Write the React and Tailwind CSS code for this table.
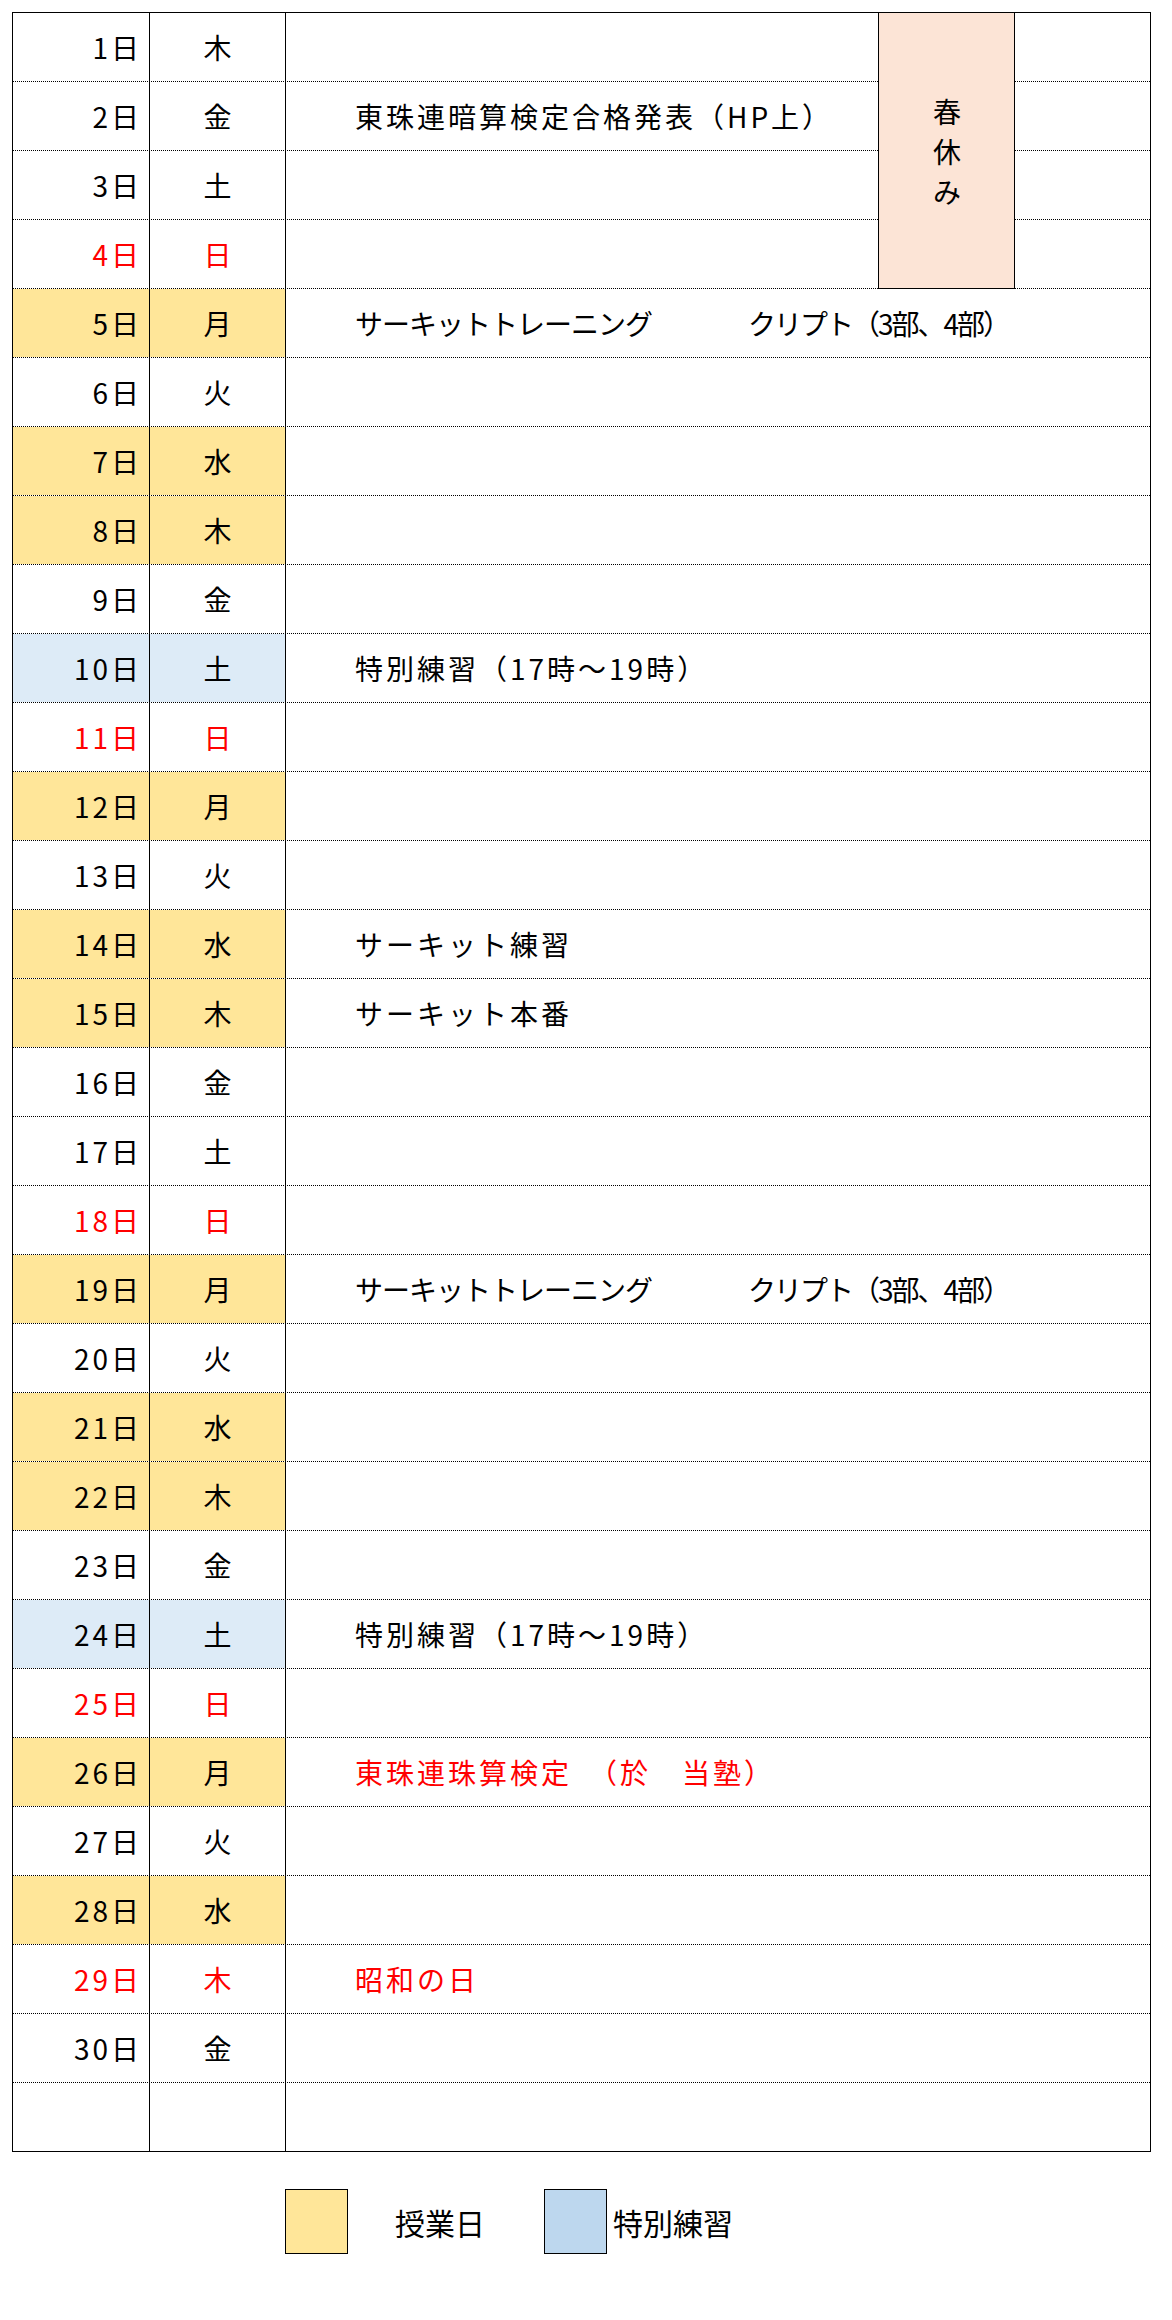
const WEEK = ['木', '金', '土', '日', '月', '火', '水'];

const CLASS_DAYS = [5, 7, 8, 12, 14, 15, 19, 21, 22, 26, 28];
const SPECIAL_DAYS = [10, 24];
const HOLIDAYS = [29];

const EVENTS = {
  2: { text: '東珠連暗算検定合格発表（HP上）' },
  5: { text: 'サーキットトレーニング', extra: 'クリプト（3部、4部）' },
  10: { text: '特別練習（17時～19時）' },
  14: { text: 'サーキット練習' },
  15: { text: 'サーキット本番' },
  19: { text: 'サーキットトレーニング', extra: 'クリプト（3部、4部）' },
  24: { text: '特別練習（17時～19時）' },
  26: { text: '東珠連珠算検定　（於　当塾）', red: true },
  29: { text: '昭和の日', red: true },
};

const days = Array.from({ length: 30 }, (_, i) => {
  const day = i + 1;
  const weekday = WEEK[i % 7];
  return {
    day,
    weekday,
    red: weekday === '日' || HOLIDAYS.includes(day),
    fill: CLASS_DAYS.includes(day) ? 'bg-[#ffe699]' : SPECIAL_DAYS.includes(day) ? 'bg-[#ddebf7]' : 'bg-white',
    event: EVENTS[day],
  };
});

const Row = ({ item }) => {
  const color = item.red ? 'text-[#ff0000]' : 'text-black';
  const ev = item.event;
  return (
    <div className="flex h-[69px] border-b border-dotted border-black">
      <div className={`w-[137px] shrink-0 border-r border-black flex items-center justify-end pr-[7px] ${item.fill} ${color}`}>
        {item.day}日
      </div>
      <div className={`w-[136px] shrink-0 border-r border-black flex items-center justify-center pl-[3px] ${item.fill} ${color}`}>
        {item.weekday}
      </div>
      <div className="flex-1 flex items-center pl-[69px]">
        {ev && !ev.extra && (
          <span className={ev.red ? 'text-[#ff0000]' : 'text-black'}>{ev.text}</span>
        )}
        {ev && ev.extra && (
          <>
            <span className="w-[393px] tracking-[-1px]">{ev.text}</span>
            <span className="tracking-[-2px]">{ev.extra}</span>
          </>
        )}
      </div>
    </div>
  );
};

export default function App() {
  return (
    <div className="w-[1172px] min-h-[2320px] bg-white pt-[12px] font-['Noto_Sans_CJK_JP',sans-serif] text-[28px] leading-none tracking-[3px]">
      <div className="relative ml-[12px] w-[1139px] border border-black">
        {days.map((item) => (
          <Row key={item.day} item={item} />
        ))}
        <div className="flex h-[68px]">
          <div className="w-[137px] border-r border-black" />
          <div className="w-[136px] border-r border-black" />
          <div className="flex-1" />
        </div>

        <div className="absolute left-[865px] top-[-1px] w-[137px] h-[277px] border border-black bg-[#fce4d6] flex flex-col items-center justify-center leading-[40px] tracking-normal pl-[1px]">
          <span>春</span>
          <span>休</span>
          <span>み</span>
        </div>
      </div>

      <div className="flex items-center ml-[285px] mt-[37px] text-[30px] tracking-normal">
        <div className="w-[63px] h-[65px] border border-black bg-[#ffe699]" />
        <span className="ml-[47px] w-[90px]">授業日</span>
        <div className="ml-[59px] w-[63px] h-[65px] border border-black bg-[#bdd7ee]" />
        <span className="ml-[6px]">特別練習</span>
      </div>
    </div>
  );
}
